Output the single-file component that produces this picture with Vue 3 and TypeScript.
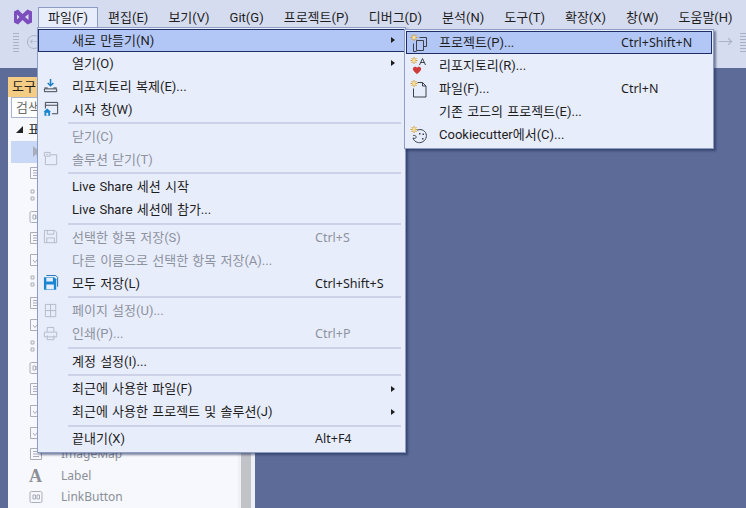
<script setup lang="ts">
interface Shape { d: string; fill?: string; stroke?: string; w?: number }
interface Row { sep?: boolean; label?: string; key?: string; icon?: string; shortcut?: string; arrow?: boolean; off?: boolean; active?: boolean }

const sun: Shape[] = [
  { d: 'M4 0v7M0.500 3.500h7M1.500 1l5 5M6.500 1l-5 5', stroke: '#d29a2e', w: 1 },
  { d: 'M2.300 3.500a1.700 1.700 0 1 0 3.400 0a1.700 1.700 0 1 0 -3.400 0z', fill: '#f7e09a' },
]
const g = '#b4b9c6'
const icons: Record<string, Shape[]> = {
  clone: [
    { d: 'M8 1v7M5 5.200L8 8.200L11 5.200', stroke: '#1a7fc6', w: 1.600 },
    { d: 'M1.500 11.500h13v3h-13z', stroke: '#3c4048', w: 1 },
    { d: 'M5 10.500H1.500M11 10.500h3.500', stroke: '#3c4048', w: 1 },
  ],
  start: [
    { d: 'M2.500 1.500h13v12h-6M2.500 8V1.500M2.500 4.500h13', stroke: '#3c4048', w: 1 },
    { d: 'M0.500 11.500L4.500 8L8.500 11.500H7.500v4h-6v-4z', fill: '#1a86d0' },
    { d: 'M3.500 12.500h2v3h-2z', fill: '#e8edfc' },
  ],
  closeSln: [
    { d: 'M1.500 1.500h6v4h-6zM8 4h6.500v10.500h-12V6', stroke: g, w: 1 },
    { d: 'M3.500 3.500h2', stroke: g, w: 1 },
  ],
  save: [
    { d: 'M1.500 1.500h11l2 2v11h-13zM4.500 1.500v4h7v-4M4 14.500v-5h8v5', stroke: g, w: 1 },
  ],
  saveAll: [
    { d: 'M3.500 0.500h10l2 2v10', stroke: '#1a6fb8', w: 1 },
    { d: 'M1 2.500h11l2 2v11H1z', fill: '#1a86d0' },
    { d: 'M3.500 3h7v4h-7zM3.500 10h8v5h-8z', fill: '#e8edfc' },
  ],
  page: [
    { d: 'M2.500 1.500h11v13h-11zM8 1.500v13M2.500 8h11', stroke: g, w: 1 },
  ],
  print: [
    { d: 'M4.500 6V1.500h7V6M1.500 6.500h13v5h-13zM4.500 10v4.500h7V10', stroke: g, w: 1 },
  ],
  project: [
    ...sun,
    { d: 'M9.500 3.500h7v9h-3', stroke: '#3c4048', w: 1 },
    { d: 'M6.500 6.500h7v10h-7z', stroke: '#3c4048', w: 1 },
    { d: 'M3.500 9.500v8h3', stroke: '#3c4048', w: 1 },
  ],
  repo: [
    ...sun,
    { d: 'M3 11c1.500-2 3.500-1.500 4 0c0.500-1.500 2.500-2 4 0c0.800 2-2 4.500-4 6c-2-1.500-4.800-4-4-6z', fill: '#d13a3a' },
    { d: 'M9.500 8L12.500 1.500L15.500 8M10.800 5.500h3.400', stroke: '#3c4048', w: 1 },
  ],
  file: [
    ...sun,
    { d: 'M7.500 2.500h5l3.500 3.500v11H3.500V8.500', stroke: '#3c4048', w: 1 },
    { d: 'M12.500 2.500v3.500h3.500', stroke: '#3c4048', w: 1 },
  ],
  cookie: [
    ...sun,
    { d: 'M7 4.500C9 3 13 3 15.500 6.500C17.500 10 16 15 11 16.500C7.500 17.200 4 15.500 3 12C5 13 6.500 12 6 10.500C5.500 9 3.500 9.500 3 9.500', stroke: '#3c4048', w: 1 },
    { d: 'M9 7h1.500v1.500H9zM12.500 7.500H14V9h-1.500zM12 12h1.500v1.500H12z', fill: '#3c4048' },
  ],
}

const menuBar = ['파일(F)', '편집(E)', '보기(V)', 'Git(G)', '프로젝트(P)', '디버그(D)', '분석(N)', '도구(T)', '확장(X)', '창(W)', '도움말(H)']

const fileMenu: Row[] = [
  { key: 'n', label: '새로 만들기(N)', arrow: true, active: true },
  { key: 'o', label: '열기(O)', arrow: true },
  { key: 'c', label: '리포지토리 복제(E)...', icon: 'clone' },
  { key: 'w', label: '시작 창(W)', icon: 'start' },
  { key: 's1', sep: true },
  { key: 'cl', label: '닫기(C)', off: true },
  { key: 'cs', label: '솔루션 닫기(T)', off: true, icon: 'closeSln' },
  { key: 's2', sep: true },
  { key: 'ls', label: 'Live Share 세션 시작' },
  { key: 'lj', label: 'Live Share 세션에 참가...' },
  { key: 's3', sep: true },
  { key: 'sv', label: '선택한 항목 저장(S)', off: true, icon: 'save', shortcut: 'Ctrl+S' },
  { key: 'sa', label: '다른 이름으로 선택한 항목 저장(A)...', off: true },
  { key: 'al', label: '모두 저장(L)', icon: 'saveAll', shortcut: 'Ctrl+Shift+S' },
  { key: 's4', sep: true },
  { key: 'pg', label: '페이지 설정(U)...', off: true, icon: 'page' },
  { key: 'pr', label: '인쇄(P)...', off: true, icon: 'print', shortcut: 'Ctrl+P' },
  { key: 's5', sep: true },
  { key: 'ac', label: '계정 설정(I)...' },
  { key: 's6', sep: true },
  { key: 'rf', label: '최근에 사용한 파일(F)', arrow: true },
  { key: 'rp', label: '최근에 사용한 프로젝트 및 솔루션(J)', arrow: true },
  { key: 's7', sep: true },
  { key: 'ex', label: '끝내기(X)', shortcut: 'Alt+F4' },
]

const newMenu: Row[] = [
  { key: 'p', label: '프로젝트(P)...', icon: 'project', shortcut: 'Ctrl+Shift+N', active: true },
  { key: 'r', label: '리포지토리(R)...', icon: 'repo' },
  { key: 'f', label: '파일(F)...', icon: 'file', shortcut: 'Ctrl+N' },
  { key: 'e', label: '기존 코드의 프로젝트(E)...' },
  { key: 'k', label: 'Cookiecutter에서(C)...', icon: 'cookie' },
]

const tools: { label: string; kind: number }[] = [
  { label: '', kind: 0 }, { label: '', kind: 1 }, { label: '', kind: 2 }, { label: '', kind: 3 },
  { label: '', kind: 1 }, { label: '', kind: 4 }, { label: '', kind: 2 }, { label: '', kind: 1 },
  { label: '', kind: 4 }, { label: '', kind: 2 }, { label: '', kind: 3 }, { label: '', kind: 1 },
  { label: '', kind: 4 }, { label: '', kind: 4 }, { label: 'ImageMap', kind: 1 }, { label: 'Label', kind: 5 },
  { label: 'LinkButton', kind: 3 },
]
</script>

<template>
  <div class="app">
    <header class="top">
      <nav class="menubar">
        <svg class="logo" viewBox="0 0 20 20" width="20" height="20">
          <path d="M5 2.500L9.500 7L14.500 2.500L19 4.500V15.500L14.500 17.500L9.500 13L5 17.500L1 15.500V4.500z" fill="#7c4dbd" />
          <path d="M4 7.500L6.500 10L4 12.500zM12 10L15.500 7V13z" fill="#d6dcef" />
        </svg>
        <span v-for="(m, i) in menuBar" :key="m" class="mitem" :class="{ open: i === 0 }">{{ m }}</span>
      </nav>
      <div class="toolbar">
        <span class="grip"></span>
        <span class="back">←</span>
        <span class="forward">→</span>
        <span class="grip"></span>
      </div>
    </header>

    <main class="work">
      <aside class="panel">
        <div class="ptitle">도구 상자</div>
        <div class="psearch">검색</div>
        <div class="pbody">
          <div class="tree">
            <div class="thead"><span class="tri"></span>표준</div>
            <div v-for="(t, i) in tools" :key="i" class="tool" :class="{ sel: i === 0 }">
              <span v-if="t.kind === 5" class="bigA">A</span>
              <svg v-else viewBox="0 0 14 14" width="14" height="14" class="ticon">
                <path v-if="t.kind === 0" d="M4 1v11l3-3l2 4l1.500-1L8.500 8H12z" fill="#a9adb8" />
                <path v-else-if="t.kind === 1" d="M1.500 1.500h11v11h-11zM4 4.500h6M4 7h6M4 9.500h6" fill="none" stroke="#a9adb8" />
                <path v-else-if="t.kind === 2" d="M2 2h3v3H2zM2 9h3v3H2zM8 2h4M8 3.500h4M8 9h4M8 10.500h4" fill="none" stroke="#a9adb8" />
                <path v-else-if="t.kind === 3" d="M2.500 1.500h9a1.500 1.500 0 0 1 1.500 1.500v8a1.500 1.500 0 0 1 -1.500 1.500h-9a1.500 1.500 0 0 1 -1.500 -1.500v-8a1.500 1.500 0 0 1 1.500 -1.500zM4 5h2.500v4H4zM8 5h2.500v4H8z" fill="none" stroke="#a9adb8" />
                <path v-else d="M1.500 1.500h11v11h-11zM4 7l2 2.500l4-5" fill="none" stroke="#a9adb8" />
              </svg>
              <span class="tlabel">{{ t.label }}</span>
            </div>
          </div>
          <div class="scroll"><span class="thumb"></span></div>
        </div>
      </aside>
    </main>

    <div class="menu file-menu">
      <template v-for="r in fileMenu" :key="r.key">
        <div v-if="r.sep" class="sep"></div>
        <div v-else class="row" :class="{ off: r.off, active: r.active }">
          <span class="ic">
            <svg v-if="r.icon" viewBox="0 0 18 18" width="17" height="17">
              <path v-for="(s, j) in icons[r.icon]" :key="j" :d="s.d" :fill="s.fill || 'none'" :stroke="s.stroke || 'none'" :stroke-width="s.w || 0" />
            </svg>
          </span>
          <span class="lab">{{ r.label }}</span>
          <span class="sc">{{ r.shortcut }}</span>
          <span v-if="r.arrow" class="arr"></span>
        </div>
      </template>
    </div>

    <div class="menu new-menu">
      <div v-for="r in newMenu" :key="r.key" class="row sub" :class="{ active: r.active }">
        <span class="ic">
          <svg v-if="r.icon" viewBox="0 0 18 18" width="18" height="18">
            <path v-for="(s, j) in icons[r.icon]" :key="j" :d="s.d" :fill="s.fill || 'none'" :stroke="s.stroke || 'none'" :stroke-width="s.w || 0" />
          </svg>
        </span>
        <span class="lab">{{ r.label }}</span>
        <span class="sc">{{ r.shortcut }}</span>
      </div>
    </div>
  </div>
</template>

<style scoped>
.app {
  position: relative;
  width: 746px;
  height: 508px;
  overflow: hidden;
  display: flex;
  flex-direction: column;
  background: #5d6b99;
  color: #1e1e1e;
  font: 13px/16px Roboto, "Noto Sans CJK KR", sans-serif;
}
.top {
  height: 68px;
  flex: none;
  background: #d6dcef;
  display: flex;
  flex-direction: column;
}
.menubar {
  height: 28px;
  padding: 7px 0 0 13px;
  box-sizing: border-box;
  display: flex;
  align-items: flex-start;
}
.logo {
  margin: 0 5px 0 0;
}
.mitem {
  height: 20px;
  line-height: 19px;
  padding: 0 9px;
  white-space: nowrap;
  box-sizing: border-box;
  border: 1px solid transparent;
}
.mitem.open {
  background: #e8edfc;
  border-color: #8e9dc4;
  border-bottom: none;
  height: 21px;
}
.toolbar {
  flex: 1;
  display: flex;
  align-items: center;
  padding: 0 0 12px 13px;
}
.grip {
  width: 6px;
  height: 19px;
  background: repeating-linear-gradient(0deg, #a9b1c8 0 1px, transparent 1px 3px);
}
.back {
  margin-left: 8px;
  width: 12px;
  height: 12px;
  border: 1px solid #aab2c8;
  border-radius: 50%;
  color: #aab2c8;
  font-size: 9px;
  line-height: 12px;
  text-align: center;
}
.forward {
  margin-left: auto;
  margin-right: 7px;
  color: #aab2c8;
  font-size: 15px;
}
.work {
  flex: 1;
  display: flex;
  padding: 9px 0 0 8px;
  min-height: 0;
}
.panel {
  width: 247px;
  display: flex;
  flex-direction: column;
  background: #f6f8fe;
}
.ptitle {
  height: 20px;
  line-height: 20px;
  padding-left: 4px;
  background: #f5cc84;
  white-space: nowrap;
}
.psearch {
  height: 21px;
  line-height: 19px;
  margin: 0 3px;
  padding-left: 4px;
  background: #fff;
  border: 1px solid #a9b4d0;
  box-sizing: border-box;
  color: #6d6d6d;
}
.pbody {
  flex: 1;
  display: flex;
  min-height: 0;
}
.tree {
  flex: 1;
  min-width: 0;
}
.thead {
  height: 23px;
  display: flex;
  align-items: center;
  padding-left: 8px;
  gap: 5px;
}
.tri {
  width: 0;
  height: 0;
  border-style: solid;
  border-width: 0 0 7px 7px;
  border-color: transparent transparent #222 transparent;
}
.tool {
  height: 21.600px;
  display: flex;
  align-items: center;
  margin-left: 3px;
  padding-left: 18px;
  gap: 18px;
  color: #8c8f96;
}
.tool.sel {
  background: #c9d8f7;
}
.ticon {
  flex: none;
}
.tlabel {
  font: 12px/16px "Noto Sans", sans-serif;
}
.bigA {
  width: 14px;
  font: bold 18px/20px "Liberation Serif", serif;
  color: #8c8f96;
}
.scroll {
  width: 17px;
  padding: 0 4px 0 3px;
  box-sizing: border-box;
  background: #eef0f6;
}
.thumb {
  display: block;
  height: 100%;
  background: #c2c3c7;
}
.menu {
  position: absolute;
  box-sizing: border-box;
  background: #e8edfc;
  border: 1px solid #8e9dc4;
  box-shadow: 2px 2px 2px rgba(30, 40, 80, 0.55);
}
.file-menu {
  left: 37px;
  top: 27px;
  width: 369px;
  height: 426px;
  padding-top: 1px;
}
.new-menu {
  left: 404px;
  top: 29px;
  width: 310px;
  height: 120px;
  padding: 1px;
}
.row {
  position: relative;
  height: 23px;
  display: grid;
  grid-template-columns: 34px 243px 1fr;
  align-items: center;
  box-sizing: border-box;
  white-space: nowrap;
  word-spacing: 1px;
}
.row.sub {
  grid-template-columns: 33px 182px 1fr;
}
.row.active {
  background: #b3c7f7;
  outline: 1px solid #1f2f66;
  outline-offset: -1px;
}
.row.off {
  color: #8d929f;
}
.ic {
  display: flex;
  align-items: center;
  justify-content: center;
  padding-right: 8px;
}
.ic svg {
  display: block;
}
.sc {
  font: 12.500px/16px "Noto Sans", sans-serif;
}
.arr {
  position: absolute;
  right: 10px;
  top: 8px;
  width: 0;
  height: 0;
  border-style: solid;
  border-width: 3.500px 0 3.500px 4px;
  border-color: transparent transparent transparent #1e1e1e;
}
.sep {
  height: 2px;
  margin: 1px 4px 1.430px 30px;
  background: #ccd3e8;
}
</style>

<style>
html, body {
  margin: 0;
  background: #5d6b99;
}
</style>
